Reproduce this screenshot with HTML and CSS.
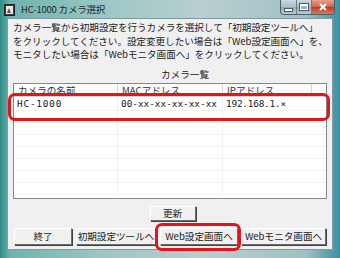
FILE: index.html
```html
<!DOCTYPE html>
<html lang="ja">
<head>
<meta charset="utf-8">
<link rel="stylesheet" href="styles.css">
</head>
<body>
<div class="window">
  <div class="titlebar">
    <svg class="appicon" width="11" height="12" viewBox="0 0 11 12">
      <rect x="0.5" y="0.5" width="10" height="11" fill="#3a3a3a" stroke="#222"/>
      <rect x="2" y="2" width="7" height="8" fill="#e8e8e8"/>
      <path d="M3 9 L5 4 L7 9 Z" fill="#555"/>
    </svg>
    <span class="title">HC-1000 カメラ選択</span>
    <div class="caption">
      <div class="cbtn min"><span class="bar"></span></div>
      <div class="cbtn max"><span class="box"></span></div>
      <div class="cbtn close">
        <svg width="10" height="8" viewBox="0 0 10 8"><path d="M2 1 L8 7 M8 1 L2 7" stroke="#fff" stroke-width="2"/></svg>
      </div>
    </div>
  </div>
  <div class="client">
    <p class="intro">カメラ一覧から初期設定を行うカメラを選択して「初期設定ツールへ」<br>をクリックしてください。設定変更したい場合は「Web設定画面へ」を、<br>モニタしたい場合は「Webモニタ画面へ」をクリックしてください。</p>
    <div class="listtitle">カメラ一覧</div>
    <div class="list">
      <div class="row head">
        <div class="c1">カメラの名前</div>
        <div class="c2">MACアドレス</div>
        <div class="c3">IPアドレス</div>
      </div>
      <div class="row sel">
        <div class="c1">HC-1000</div>
        <div class="c2">00-xx-xx-xx-xx-xx</div>
        <div class="c3">192.168.1.×</div>
      </div>
      <div class="row"><div class="c1"></div><div class="c2"></div><div class="c3"></div></div>
      <div class="row"><div class="c1"></div><div class="c2"></div><div class="c3"></div></div>
      <div class="row"><div class="c1"></div><div class="c2"></div><div class="c3"></div></div>
      <div class="row"><div class="c1"></div><div class="c2"></div><div class="c3"></div></div>
      <div class="row"><div class="c1"></div><div class="c2"></div><div class="c3"></div></div>
      <div class="row"><div class="c1"></div><div class="c2"></div><div class="c3"></div></div>
      <div class="row"><div class="c1"></div><div class="c2"></div><div class="c3"></div></div>
    </div>
    <div class="refresh-wrap"><button class="btn refresh">更新</button></div>
    <div class="buttons">
      <button class="btn b-exit">終了</button>
      <button class="btn b-init">初期設定ツールへ</button>
      <button class="btn b-web">Web設定画面へ</button>
      <button class="btn b-mon">Webモニタ画面へ</button>
    </div>
  </div>
</div>
</body>
</html>
```
FILE: styles.css
```css
* { box-sizing: border-box; }
html, body { margin: 0; padding: 0; }
body {
  width: 340px; height: 258px; overflow: hidden;
  font-family: "Noto Sans CJK JP", "Noto Sans", sans-serif;
  color: #1a1a1a;
}
.window {
  width: 340px; height: 258px;
  background: linear-gradient(90deg, #2f8c86 0%, #6fb3ae 3%, #9cc6c4 30%, #b9cfd0 60%, #9fc0c4 90%, #3d8fa0 100%);
  display: flex; flex-direction: column;
  padding: 0 7px 8px 7px;
}
.titlebar {
  height: 18px; flex: none;
  display: flex; align-items: center;
  margin: 0 -2px 0 -3px;
}
.appicon { flex: none; margin-top: 1px; }
.title {
  font-size: 9.5px; margin-left: 6px; color: #1c2a2c; letter-spacing: -0.2px;
}
.caption {
  margin-left: auto; align-self: flex-start;
  display: flex; height: 15px;
  border: 1px solid #4a5e66; border-top: none;
  border-radius: 0 0 4px 4px; overflow: hidden;
}
.cbtn {
  height: 14px; display: flex; align-items: center; justify-content: center;
  background: linear-gradient(#c9dadf, #a7bfc6 50%, #8fadb5 51%, #b4ccd2);
}
.min { width: 16px; border-right: 1px solid #6a7f86; }
.max { width: 15px; border-right: 1px solid #6a7f86; }
.close { width: 22px; background: linear-gradient(#e6a090, #d2604a 50%, #bb3a22 51%, #d97a60); }
.min .bar { width: 7px; height: 2px; background: #fff; border: 0; margin-top: 5px; box-shadow: 0 0 0 1px #556; }
.max .box { width: 8px; height: 6px; border: 1px solid #fff; border-top-width: 2px; box-shadow: 0 0 0 1px #556; }
.client {
  flex: 1; min-height: 0;
  background: #f0f0f0;
  border: 1px solid #7f9aa0;
  display: flex; flex-direction: column;
  padding: 0 5px 0 5px;
}
.intro {
  margin: 2px 0 0 0;
  font-size: 9.6px; line-height: 13.5px;
  letter-spacing: -0.05px;
  white-space: nowrap;
}
.listtitle {
  text-align: center; font-size: 9.6px; line-height: 12px;
  margin-top: 6px; padding-left: 30px;
}
.list {
  position: relative;
  margin-top: 3px;
  height: 116px; flex: none;
  background: #fff;
  border: 1px solid #828790;
}
.row {
  display: grid; grid-template-columns: 104px 105px 1fr;
  height: 12px; border-bottom: 1px solid #f2f2f2;
  font-size: 9.6px; line-height: 12px;
  overflow: hidden;
}
.row > div { border-right: 1px solid #f0f0f0; padding-left: 3px; overflow: hidden; white-space: nowrap; }
.row > .c3 { border-right: none; }
.row.head { height: 13px; border-bottom: 1px solid #d5d5d5; color: #333; background: linear-gradient(#fff, #f5f6f7); }
.row.head > div { border-right: 1px solid #d5d5d5; padding-left: 4px; }
.row.head > .c3 { width: 89px; }
.row.sel {
  height: 14px; line-height: 14px; overflow: visible; position: relative;
  font-family: "DejaVu Sans Mono", "Liberation Mono", monospace; font-size: 9.4px;
}
.row.sel .c1 { letter-spacing: 0.8px; }
.row.sel .c3 { letter-spacing: -0.2px; }
.row.sel::after {
  content: "";
  position: absolute;
  left: -6px; right: -4px; top: -4px; height: 22px;
  border: 3px solid #e4141b; border-radius: 7px;
}
.refresh-wrap { display: flex; justify-content: center; margin-top: 7px; padding-left: 5px; }
.btn {
  font-family: inherit; font-size: 9.6px; color: #1a1a1a;
  background: #f0f0f0;
  border: 1px solid; border-color: #fff #6e6e6e #6e6e6e #fff;
  box-shadow: 1px 1px 0 #404040;
  padding: 0; margin: 0; line-height: 12px;
  border-radius: 0; white-space: nowrap;
}
.refresh { width: 46px; height: 15px; }
.buttons {
  display: flex; align-items: center; margin-top: 7px;
  padding-left: 1px;
}
.b-exit { width: 58px; height: 17px; }
.b-init { width: 80px; height: 17px; margin-left: 4px; }
.b-web { width: 78px; height: 17px; margin-left: 4px; position: relative; }
.b-web::after {
  content: "";
  position: absolute;
  left: -6px; right: -4px; top: -6px; bottom: -7px;
  border: 3px solid #e4141b; border-radius: 7px;
}
.b-mon { width: 85px; height: 17px; margin-left: 3px; }
```
